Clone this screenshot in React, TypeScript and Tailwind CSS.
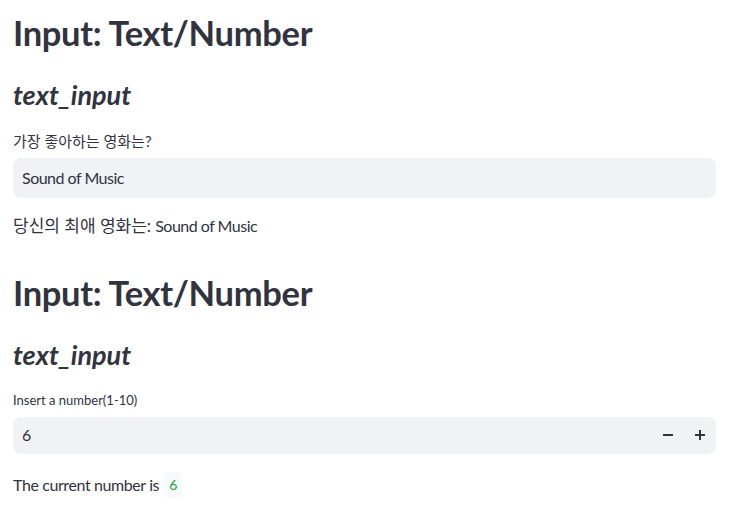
import React from "react";

const font = { fontFamily: 'Lato, "Noto Sans CJK KR", sans-serif' };

export default function App() {
  return (
    <div className="w-[735px] h-[521px] bg-white text-[#31333F] overflow-hidden" style={font}>
      <div className="w-[703px] ml-[13px] flex flex-col">
        <h1 className="text-[34.5px] font-bold leading-[1.2] mt-[12px] tracking-[-0.3px]">Input: Text/Number</h1>
        <h2 className="text-[27px] font-bold italic leading-[1.2] mt-[26px]">text_input</h2>
        <label className="text-[15px] mt-[19px] leading-[20px]">가장 좋아하는 영화는?</label>
        <div className="mt-[7px] h-[40px] rounded-lg bg-[#f0f2f6] flex items-center px-[9px] text-[16px] tracking-[-0.5px]">Sound of Music</div>
        <p className="text-[16px] mt-[16px] leading-[24px]">
          <span className="text-[17px]">당신의 최애 영화는:</span>{" "}
          <span className="tracking-[-0.5px]">Sound of Music</span>
        </p>

        <h1 className="text-[34.5px] font-bold leading-[1.2] mt-[34px] tracking-[-0.3px]">Input: Text/Number</h1>
        <h2 className="text-[27px] font-bold italic leading-[1.2] mt-[26px]">text_input</h2>
        <label className="text-[13px] mt-[18px] leading-[20px]">Insert a number(1-10)</label>
        <div className="mt-[7px] h-[37px] rounded-lg bg-[#f0f2f6] flex items-center pl-[9px] text-[16px]">
          <span className="flex-1">6</span>
          <div className="flex items-center h-full">
            <button className="w-[32px] h-full flex items-center justify-center">
              <svg width="10" height="10" viewBox="0 0 10 10"><rect x="0" y="4" width="10" height="2" fill="#31333F" /></svg>
            </button>
            <button className="w-[32px] h-full flex items-center justify-center">
              <svg width="10" height="10" viewBox="0 0 10 10"><rect x="0" y="4" width="10" height="2" fill="#31333F" /><rect x="4" y="0" width="2" height="10" fill="#31333F" /></svg>
            </button>
          </div>
        </div>
        <p className="text-[16px] mt-[18px] leading-[24px] flex items-center">
          <span className="tracking-[-0.4px]">The current number is</span>
          <code className="ml-[5px] bg-[#f8f9fb] text-[#09ab3b] text-[14px] px-[5px] py-[1px] rounded" style={font}>6</code>
        </p>
      </div>
    </div>
  );
}
